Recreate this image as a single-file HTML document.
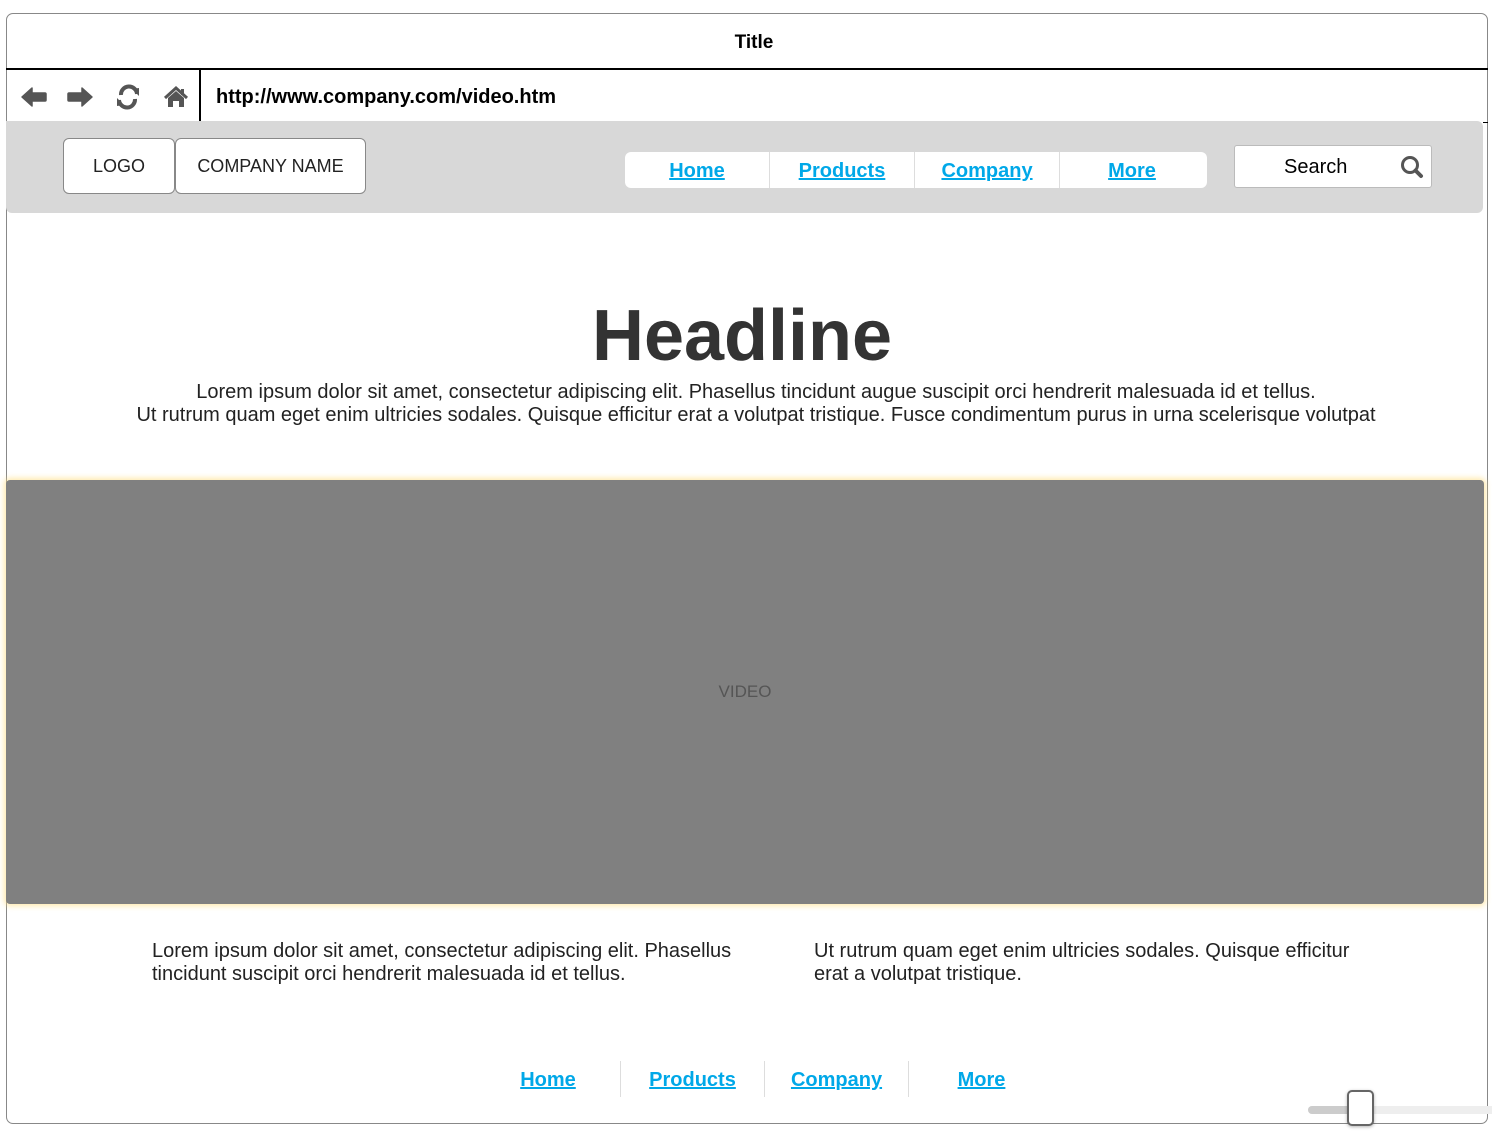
<!DOCTYPE html>
<html><head><meta charset="utf-8"><style>
*{margin:0;padding:0;box-sizing:border-box}
body{width:1492px;height:1140px;background:#fff;font-family:"Liberation Sans",Arial,sans-serif;position:relative;overflow:hidden}
.a{position:absolute}
.lnk{color:#00a8e8;font-weight:bold;text-decoration:underline;font-size:20px}
</style></head><body>
<div class="a" style="left:6px;top:13px;width:1482px;height:1111px;border:1px solid #888;border-radius:7px"></div>
<div class="a" style="left:13px;top:32px;width:1482px;text-align:center;font-size:19px;font-weight:bold;color:#000">Title</div>
<div class="a" style="left:6px;top:68px;width:1482px;height:2px;background:#000"></div>
<div class="a" style="left:199px;top:69px;width:2px;height:52px;background:#000"></div>
<div class="a" style="left:1483px;top:122px;width:5px;height:1px;background:#000"></div>
<svg class="a" style="left:20px;top:84px" width="175" height="26" viewBox="0 0 175 26">
<path d="M2 13 L12 4 L12 9 L25 9 Q26 9 26 10 L26 16 Q26 17 25 17 L12 17 L12 22 Z" fill="#555" stroke="#555" stroke-width="1.5" stroke-linejoin="round"/>
<path d="M72 13 L62 4 L62 9 L49 9 Q48 9 48 10 L48 16 Q48 17 49 17 L62 17 L62 22 Z" fill="#555" stroke="#555" stroke-width="1.5" stroke-linejoin="round"/>
<path d="M117 10 A8 8 0 0 0 101 11" fill="none" stroke="#555" stroke-width="4"/>
<path d="M112 5 L119 4 L119 12 Z" fill="#555"/>
<path d="M99 16 A8 8 0 0 0 115 15" fill="none" stroke="#555" stroke-width="4"/>
<path d="M104 21 L97 22 L97 14 Z" fill="#555"/>
<path d="M145 14 L156 4 L167 14" fill="none" stroke="#555" stroke-width="3"/>
<path d="M148 14 L156 7 L164 14 L164 23 L159 23 L159 17 L153 17 L153 23 L148 23 Z" fill="#555"/>
<rect x="161" y="5" width="3" height="6" fill="#555"/>
</svg>
<div class="a" style="left:216px;top:86px;font-size:20px;font-weight:bold;color:#000">http://www.company.com/video.htm</div>
<div class="a" style="left:6px;top:121px;width:1477px;height:92px;background:#d8d8d8;border-radius:0 6px 6px 6px"></div>
<div class="a" style="left:63px;top:138px;width:112px;height:56px;background:#fff;border:1px solid #888;border-radius:6px;font-size:18px;color:#222;text-align:center;line-height:54px">LOGO</div>
<div class="a" style="left:175px;top:138px;width:191px;height:56px;background:#fff;border:1px solid #888;border-radius:6px;font-size:18px;color:#222;text-align:center;line-height:54px">COMPANY NAME</div>
<div class="a" style="left:625px;top:152px;width:582px;height:36px;background:#fff;border-radius:6px;display:flex">
<div style="width:145px;text-align:center;line-height:38px;border-right:1px solid #ddd"><span class="lnk">Home</span></div>
<div style="width:145px;text-align:center;line-height:38px;border-right:1px solid #ddd"><span class="lnk">Products</span></div>
<div style="width:145px;text-align:center;line-height:38px;border-right:1px solid #ddd"><span class="lnk">Company</span></div>
<div style="width:147px;text-align:center;line-height:38px;padding-right:3px"><span class="lnk">More</span></div>
</div>
<div class="a" style="left:1234px;top:145px;width:198px;height:43px;background:#fff;border:1px solid #bbb;border-radius:3px;font-size:20px;line-height:43px;padding-left:49px;color:#000">Search</div>
<svg class="a" style="left:1400px;top:155px" width="24" height="24" viewBox="0 0 24 24"><circle cx="10" cy="10" r="7.5" fill="none" stroke="#555" stroke-width="3"/><path d="M15.5 15.5 L21 21" stroke="#555" stroke-width="4" stroke-linecap="round"/></svg>
<div class="a" style="left:0;top:294px;width:1484px;text-align:center;font-size:72px;font-weight:bold;color:#333;line-height:84px">Headline</div>
<div class="a" style="left:0;top:381px;width:1512px;text-align:center;font-size:20px;color:#222;line-height:23px">Lorem ipsum dolor sit amet, consectetur adipiscing elit. Phasellus tincidunt augue suscipit orci hendrerit malesuada id et tellus.<br>Ut rutrum quam eget enim ultricies sodales. Quisque efficitur erat a volutpat tristique. Fusce condimentum purus in urna scelerisque volutpat</div>
<div class="a" style="left:6px;top:480px;width:1478px;height:424px;background:#808080;border-radius:4px;box-shadow:0 0 6px 2px rgba(255,220,120,.6);text-align:center;line-height:424px;font-size:17px;color:#555">VIDEO</div>
<div class="a" style="left:152px;top:940px;width:620px;font-size:20px;color:#222;line-height:23px">Lorem ipsum dolor sit amet, consectetur adipiscing elit. Phasellus tincidunt suscipit orci hendrerit malesuada id et tellus.</div>
<div class="a" style="left:814px;top:940px;width:560px;font-size:20px;color:#222;line-height:23px">Ut rutrum quam eget enim ultricies sodales. Quisque efficitur erat a volutpat tristique.</div>
<div class="a" style="left:476px;top:1061px;display:flex;height:36px">
<div style="width:145px;text-align:center;line-height:38px;border-right:1px solid #ddd"><span class="lnk">Home</span></div>
<div style="width:144px;text-align:center;line-height:38px;border-right:1px solid #ddd"><span class="lnk">Products</span></div>
<div style="width:144px;text-align:center;line-height:38px;border-right:1px solid #ddd"><span class="lnk">Company</span></div>
<div style="width:145px;text-align:center;line-height:38px"><span class="lnk">More</span></div>
</div>
<div class="a" style="left:1308px;top:1106px;width:190px;height:8px;background:#eee;border-radius:4px"></div>
<div class="a" style="left:1308px;top:1106px;width:45px;height:8px;background:#ccc;border-radius:4px"></div>
<div class="a" style="left:1347px;top:1090px;width:27px;height:36px;background:#fff;border:2px solid #666;border-radius:5px;box-shadow:0 1px 3px rgba(0,0,0,.3)"></div>
</body></html>
